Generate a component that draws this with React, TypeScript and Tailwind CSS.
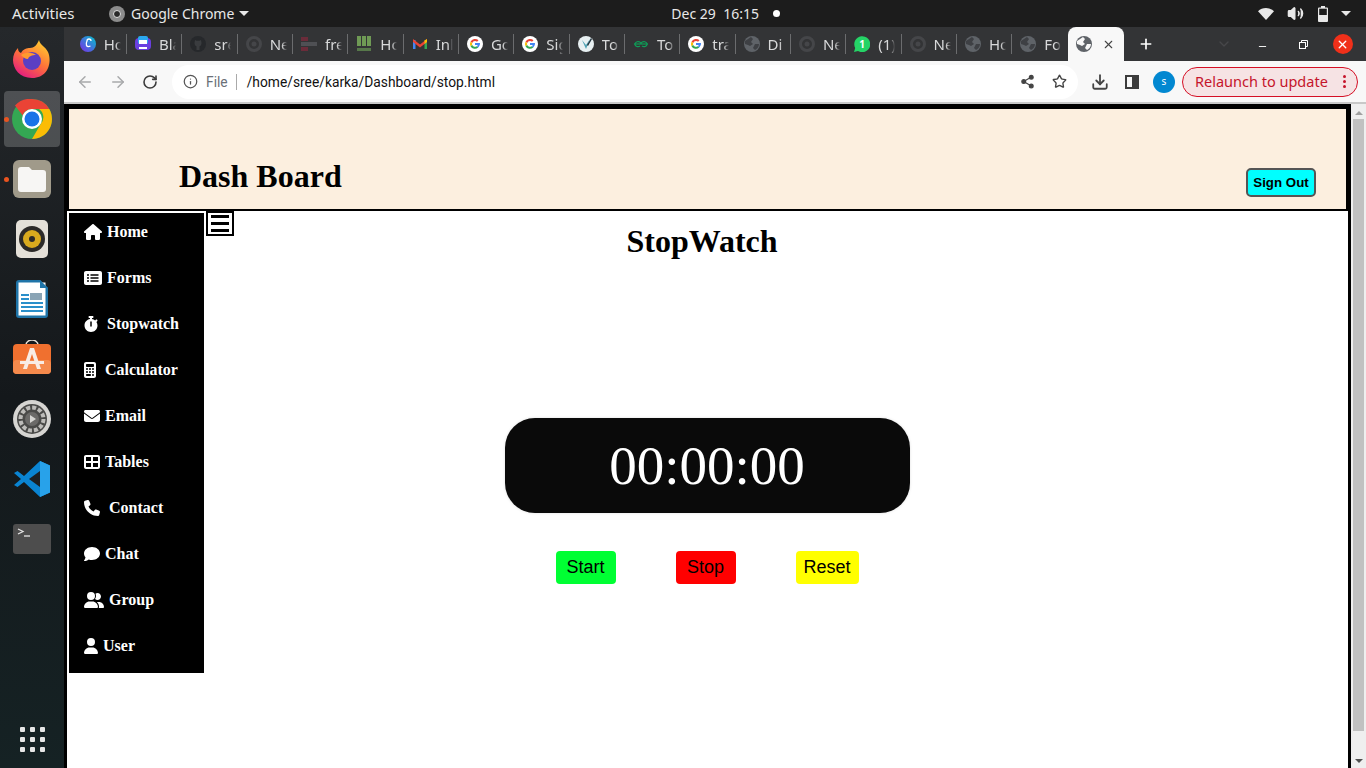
import type { ReactNode } from 'react';
import {
  FaHouse,
  FaRectangleList,
  FaStopwatch,
  FaCalculator,
  FaEnvelope,
  FaTableCellsLarge,
  FaPhone,
  FaComment,
  FaUserGroup,
  FaUser,
} from 'react-icons/fa6';
import {
  ArrowLeft,
  ArrowRight,
  RotateCw,
  Info,
  Share2,
  Star,
  Download,
  Plus,
  X,
  Minus,
  ChevronDown,
  Volume2,
} from 'lucide-react';

const G = (
  <svg viewBox="0 0 16 16" className="w-4 h-4 shrink-0">
    <circle cx="8" cy="8" r="8" fill="#fff" />
    <path d="M8 5a3 3 0 0 1 2 .8l1.500-1.500A5 5 0 0 0 3.500 5.800L5.200 7A3 3 0 0 1 8 5z" fill="#ea4335" />
    <path d="M3.500 5.800a5 5 0 0 0 0 4.400L5.200 9a3 3 0 0 1 0-2z" fill="#fbbc05" />
    <path d="M3.500 10.200a5 5 0 0 0 7.800 1.300L9.700 10.300A3 3 0 0 1 5.200 9z" fill="#34a853" />
    <path d="M13 7h-5v2h2.800a2.500 2.500 0 0 1-1.100 1.300l1.600 1.200A5 5 0 0 0 13 7z" fill="#4285f4" />
  </svg>
);

function globe(bg: string, band: string) {
  return (
    <svg viewBox="0 0 16 16" className="w-4 h-4 shrink-0">
      <circle cx="8" cy="8" r="8" fill={bg} />
      <path d="M1 5c2-1 4-3 6-4l2 2-2 3 2 2-3 2-2-1-3-1zM11 8l4 0c0 3-2 5-4 6l-2-2z" fill={band} />
    </svg>
  );
}

const Globe = globe('#5f6368', '#3e4044');

const ChromeDim = (
  <svg viewBox="0 0 16 16" className="w-4 h-4 shrink-0">
    <circle cx="8" cy="8" r="6.500" fill="none" stroke="#454649" strokeWidth="3" />
    <circle cx="8" cy="8" r="2.500" fill="#454649" />
  </svg>
);

const TABS: { title: string; icon: ReactNode }[] = [
  {
    title: 'Ho',
    icon: (
      <svg viewBox="0 0 16 16" className="w-4 h-4 shrink-0">
        <defs>
          <linearGradient id="canva" x1="0" y1="1" x2="1" y2="0">
            <stop offset="0" stopColor="#7d2ae8" />
            <stop offset="1" stopColor="#00c4cc" />
          </linearGradient>
        </defs>
        <circle cx="8" cy="8" r="8" fill="url(#canva)" />
        <path d="M11 5a2 2 0 0 0-4 0c-1.500 3-1 7 3.500 5" fill="none" stroke="#fff" strokeWidth="1.300" />
      </svg>
    ),
  },
  {
    title: 'Bla',
    icon: (
      <svg viewBox="0 0 16 16" className="w-4 h-4 shrink-0">
        <rect x="0" y="2" width="16" height="12" rx="4" fill="#6a3fe0" />
        <rect x="3" y="0" width="10" height="8" rx="2" fill="#2aa8f0" />
        <rect x="4" y="4" width="8" height="4" fill="#fff" />
        <rect x="4" y="11" width="8" height="2" fill="#fff" />
      </svg>
    ),
  },
  {
    title: 'sre',
    icon: (
      <svg viewBox="0 0 16 16" className="w-4 h-4 shrink-0">
        <circle cx="8" cy="8" r="8" fill="#26282b" />
        <path d="M5 4l1.500.8h3L11 4l.5 3c0 2-1 3-2 3.300V14H6.500v-3.700C5.500 10 4.500 9 4.500 7z" fill="#3a3c3f" />
      </svg>
    ),
  },
  { title: 'Ne', icon: ChromeDim },
  {
    title: 'fre',
    icon: (
      <svg viewBox="0 0 16 16" className="w-4 h-4 shrink-0">
        <rect x="0" y="1" width="7" height="4" fill="#6b2c3a" />
        <rect x="0" y="6" width="16" height="4" fill="#4f5054" />
        <rect x="0" y="11" width="7" height="4" fill="#6b2c3a" />
      </svg>
    ),
  },
  {
    title: 'Ho',
    icon: (
      <svg viewBox="0 0 16 16" className="w-4 h-4 shrink-0">
        <rect x="1" y="0" width="4" height="10" fill="#6f9a55" />
        <rect x="6" y="0" width="4" height="10" fill="#6f9a55" />
        <rect x="11" y="0" width="4" height="10" fill="#6f9a55" />
        <rect x="1" y="12" width="14" height="3" fill="#57784a" />
      </svg>
    ),
  },
  {
    title: 'Inl',
    icon: (
      <svg viewBox="0 0 16 16" className="w-4 h-4 shrink-0">
        <path d="M1 4h2.500v9H1z" fill="#4285f4" />
        <path d="M12.500 4H15v9h-2.500z" fill="#34a853" />
        <path d="M1 3l7 5.500L15 3v3l-7 5.500L1 6z" fill="#ea4335" />
        <path d="M12.500 4.500L15 3v3l-2.500 2z" fill="#fbbc05" />
      </svg>
    ),
  },
  { title: 'Go', icon: G },
  { title: 'Sig', icon: G },
  {
    title: 'To',
    icon: (
      <svg viewBox="0 0 16 16" className="w-4 h-4 shrink-0">
        <circle cx="8" cy="8" r="8" fill="#e8f0f2" />
        <path d="M4 4l4 9 4-10-4 6z" fill="#4fa3b5" />
        <path d="M9 9l4-7 1 1-4 7z" fill="#20323c" />
      </svg>
    ),
  },
  {
    title: 'To',
    icon: (
      <svg viewBox="0 0 16 16" className="w-4 h-4 shrink-0">
        <path d="M1 8h14" stroke="#0f9d58" strokeWidth="1.200" />
        <path d="M8 8a3 2.500 0 1 0-1 2M8 8a3 2.500 0 1 1 1 2" fill="none" stroke="#0f9d58" strokeWidth="1.200" />
      </svg>
    ),
  },
  { title: 'tra', icon: G },
  { title: 'Di', icon: Globe },
  { title: 'Ne', icon: ChromeDim },
  {
    title: '(1)',
    icon: (
      <svg viewBox="0 0 16 16" className="w-4 h-4 shrink-0">
        <path d="M0 16l1.200-4A8 8 0 1 1 4 15z" fill="#25d366" />
        <text x="8" y="11.500" textAnchor="middle" fontSize="10" fontWeight="700" fill="#fff" fontFamily="Open Sans, sans-serif">1</text>
      </svg>
    ),
  },
  { title: 'Ne', icon: ChromeDim },
  { title: 'Ho', icon: Globe },
  { title: 'Fo', icon: Globe },
];

const MENU = [
  { label: 'Home', icon: <FaHouse className="w-[18px] h-[16px]" />, gap: 'ml-[5px]' },
  { label: 'Forms', icon: <FaRectangleList className="w-[18px] h-[16px]" />, gap: 'ml-[5px]' },
  { label: 'Stopwatch', icon: <FaStopwatch className="w-[14px] h-[16px]" />, gap: 'ml-[9px]' },
  { label: 'Calculator', icon: <FaCalculator className="w-[12px] h-[16px]" />, gap: 'ml-[9px]' },
  { label: 'Email', icon: <FaEnvelope className="w-[16px] h-[16px]" />, gap: 'ml-[5px]' },
  { label: 'Tables', icon: <FaTableCellsLarge className="w-[16px] h-[16px]" />, gap: 'ml-[5px]' },
  { label: 'Contact', icon: <FaPhone className="w-[16px] h-[16px]" />, gap: 'ml-[9px]' },
  { label: 'Chat', icon: <FaComment className="w-[16px] h-[16px]" />, gap: 'ml-[5px]' },
  { label: 'Group', icon: <FaUserGroup className="w-[20px] h-[16px]" />, gap: 'ml-[5px]' },
  { label: 'User', icon: <FaUser className="w-[14px] h-[16px]" />, gap: 'ml-[5px]' },
];

const DOCK: { key: string; marker?: boolean; active?: boolean; icon: ReactNode }[] = [
  {
    key: 'firefox',
    icon: (
      <svg viewBox="0 0 38 38" className="w-[38px] h-[38px]">
        <defs>
          <linearGradient id="ff" x1="0.8" y1="0" x2="0.2" y2="1">
            <stop offset="0" stopColor="#ffd02f" />
            <stop offset="0.5" stopColor="#ff7139" />
            <stop offset="1" stopColor="#e31587" />
          </linearGradient>
        </defs>
        <path d="M26 0c1 5 6 6 9 12 4 9 1 26-16 26C7 38 0 29 0 20c0-5 2-9 5-12 0 3 1 4 3 5 2-4 6-5 9-5 4 0 7-3 9-8z" fill="url(#ff)" />
        <circle cx="19" cy="21" r="9" fill="#5b3fc4" />
        <path d="M8 15c4-3 11-3 15 0-4 0-7 1-8 4-3 0-5-2-7-4z" fill="#ff9a2e" />
      </svg>
    ),
  },
  {
    key: 'chrome',
    active: true,
    marker: true,
    icon: (
      <svg viewBox="0 0 40 40" className="w-10 h-10">
        <circle cx="20" cy="20" r="20" fill="#34a853" />
        <path d="M20 0a20 20 0 0 1 17.300 10H20a10 10 0 0 0-9.300 6.500L3 6.500A20 20 0 0 1 20 0z" fill="#ea4335" />
        <path d="M37.300 10A20 20 0 0 1 20 40l8.700-15A10 10 0 0 0 27 10z" fill="#fbbc05" />
        <circle cx="20" cy="20" r="10" fill="#fff" />
        <circle cx="20" cy="20" r="7.500" fill="#1a73e8" />
      </svg>
    ),
  },
  {
    key: 'files',
    marker: true,
    icon: (
      <svg viewBox="0 0 38 38" className="w-[38px] h-[38px]">
        <rect width="38" height="38" rx="6" fill="#a09a8a" />
        <path d="M5 10a3 3 0 0 1 3-3h8l3 3h11a3 3 0 0 1 3 3v16a3 3 0 0 1-3 3H8a3 3 0 0 1-3-3z" fill="#f7f6f4" />
      </svg>
    ),
  },
  {
    key: 'rhythmbox',
    icon: (
      <svg viewBox="0 0 32 38" className="w-8 h-[38px]">
        <rect width="32" height="38" rx="5" fill="#e4e0d8" />
        <circle cx="16" cy="19" r="13" fill="#2c2a28" />
        <circle cx="16" cy="19" r="9" fill="#d9aa1e" />
        <circle cx="16" cy="19" r="3" fill="#2c2a28" />
      </svg>
    ),
  },
  {
    key: 'writer',
    icon: (
      <svg viewBox="0 0 32 38" className="w-8 h-[38px]">
        <path d="M3 0h21l8 8v27a3 3 0 0 1-3 3H3a3 3 0 0 1-3-3V3a3 3 0 0 1 3-3z" fill="#1f74a8" />
        <rect x="2.500" y="2.500" width="27" height="33" fill="#fff" />
        <path d="M24 0l8 8h-8z" fill="#1f74a8" />
        <rect x="5" y="14" width="8" height="2" fill="#2a8fca" />
        <rect x="5" y="18" width="8" height="2" fill="#2a8fca" />
        <rect x="5" y="22" width="22" height="2" fill="#2a8fca" />
        <rect x="5" y="26" width="22" height="2" fill="#2a8fca" />
        <rect x="5" y="30" width="22" height="2" fill="#2a8fca" />
        <rect x="14" y="13" width="12" height="7" fill="#8aa4b5" />
      </svg>
    ),
  },
  {
    key: 'software',
    icon: (
      <svg viewBox="0 0 38 38" className="w-[38px] h-[38px]">
        <path d="M13 5a6 5 0 0 1 12 0" fill="none" stroke="#e7dfd6" strokeWidth="1.500" />
        <rect y="4" width="38" height="30" rx="4" fill="#f0702f" />
        <rect y="20" width="38" height="14" rx="4" fill="#f58a4c" />
        <path d="M17 8h4l7 21h-4l-5-15-5 15h-4z M7 21h24v3H7z" fill="#f8ece4" />
      </svg>
    ),
  },
  {
    key: 'settings',
    icon: (
      <svg viewBox="0 0 38 38" className="w-[38px] h-[38px]">
        <circle cx="19" cy="19" r="19" fill="#d6d5d2" />
        <circle cx="19" cy="19" r="15" fill="#4a4a48" />
        <circle cx="19" cy="19" r="11.500" fill="none" stroke="#bdbcb9" strokeWidth="4" strokeDasharray="4 2" />
        <circle cx="19" cy="19" r="7" fill="#6b6a68" />
        <path d="M17 15l6 4-6 4z" fill="#d6d5d2" />
      </svg>
    ),
  },
  {
    key: 'vscode',
    icon: (
      <svg viewBox="0 0 36 36" className="w-9 h-9">
        <path d="M26 0l10 4.500v27L26 36 10 21l-6.500 5L0 24l7-6-7-6 3.500-2 6.500 5z" fill="#0a84d2" />
        <path d="M26 0l10 4.500v27L26 36z" fill="#28a2ea" />
        <path d="M26 10L15 18l11 8z" fill="#1c2024" />
      </svg>
    ),
  },
  {
    key: 'terminal',
    icon: (
      <svg viewBox="0 0 38 30" className="w-[38px] h-[30px]">
        <rect width="38" height="30" rx="3" fill="#4d4d4d" />
        <path d="M5 5l5 2.500L5 10" fill="none" stroke="#e6e6e6" strokeWidth="1.300" />
        <path d="M11 12h6" stroke="#e6e6e6" strokeWidth="1.300" />
      </svg>
    ),
  },
];

function Dock() {
  return (
    <aside className="w-16 h-full shrink-0 flex flex-col items-center bg-gradient-to-b from-[#25282b] via-[#14181b] to-[#152224]">
      <div className="flex flex-col items-center w-full pt-[4px]">
        {DOCK.map((d) => (
          <div key={d.key} className="relative w-14 h-[56px] mb-1 flex items-center justify-center">
            {d.active && <div className="absolute inset-0 rounded bg-white/20" />}
            {d.marker && <div className="absolute left-0 top-[26px] w-[5px] h-[5px] rounded-full bg-[#e95420]" />}
            <div className="relative">{d.icon}</div>
          </div>
        ))}
      </div>
      <div className="mt-auto mb-[16px] grid grid-cols-3 gap-[5px]">
        {Array.from({ length: 9 }).map((_, i) => (
          <span key={i} className="w-[5px] h-[5px] rounded-[1px] bg-[#e6e6e6]" />
        ))}
      </div>
    </aside>
  );
}

function TopBar() {
  return (
    <header className="h-[27px] shrink-0 bg-[#1c1c1c] text-[#e8e8e8] text-[14px] flex items-center font-['Noto_Sans',sans-serif]">
      <span className="ml-[12px] w-[62px] text-[15px]">Activities</span>
      <svg viewBox="0 0 16 16" className="w-4 h-4 ml-[35px]">
        <circle cx="8" cy="8" r="8" fill="#8c8c8c" />
        <circle cx="8" cy="8" r="3.500" fill="#2a2a2a" stroke="#e0e0e0" />
      </svg>
      <span className="ml-[6px]">Google Chrome</span>
      <span className="ml-[5px] w-0 h-0 border-x-[5px] border-x-transparent border-t-[5px] border-t-[#e8e8e8]" />
      <span className="ml-[422px] flex items-center">
        Dec 29&nbsp;&nbsp;16:15
        <span className="ml-[14px] w-[7px] h-[7px] rounded-full bg-white" />
      </span>
      <div className="ml-auto mr-[15px] flex items-center">
        <svg viewBox="0 0 16 13" className="w-[16px] h-[13px]">
          <path d="M0 4.200a11.500 11.500 0 0 1 16 0L8 13z" fill="#e8e8e8" />
        </svg>
        <Volume2 className="w-[17px] h-[17px] ml-[13px]" fill="#e8e8e8" />
        <svg viewBox="0 0 10 16" className="w-[10px] h-[16px] ml-[14px]">
          <path d="M3 0h4v1.500h2a1 1 0 0 1 1 1V15a1 1 0 0 1-1 1H1a1 1 0 0 1-1-1V2.500a1 1 0 0 1 1-1h2z" fill="#e8e8e8" />
          <rect x="1.200" y="2.700" width="7.600" height="6.300" fill="#1c1c1c" />
        </svg>
        <span className="ml-[13px] w-0 h-0 border-x-[5px] border-x-transparent border-t-[5px] border-t-[#e8e8e8]" />
      </div>
    </header>
  );
}

function TabStrip() {
  return (
    <div className="h-[34px] shrink-0 bg-[#333436] flex items-stretch pl-[7.670px] text-[15px] text-[#d8d9da] font-['Noto_Sans',sans-serif]">
      {TABS.map((t, i) => (
        <div key={i} className="w-[55.330px] shrink-0 flex items-center pl-[8px] relative">
          {t.icon}
          <span className="ml-[8px] w-[17px] overflow-hidden whitespace-nowrap [mask-image:linear-gradient(to_right,black_70%,transparent)]">
            {t.title}
          </span>
          {i < TABS.length - 1 && (
            <span className="absolute right-0 top-[7px] h-[20px] w-px bg-[#6b6c6e]" />
          )}
        </div>
      ))}
      <div className="w-[56px] shrink-0 bg-[#f8f8f8] rounded-t-lg flex items-center pl-[8px] text-[#444]">
        {globe('#5f6368', '#f8f8f8')}
        <X className="w-[13px] h-[13px] ml-[10px]" strokeWidth={2} />
      </div>
      <Plus className="w-[16px] h-[16px] self-center ml-[14px] text-white" strokeWidth={2.500} />
      <ChevronDown className="w-[16px] h-[16px] self-center ml-[62px] text-[#46474a]" />
      <Minus className="w-[11px] h-[11px] self-center ml-[25px] mt-[4px] text-white" />
      <svg viewBox="0 0 9 9" className="w-[9px] h-[9px] self-center ml-[31px]">
        <rect x="0.500" y="2.500" width="6" height="6" fill="none" stroke="#fff" />
        <path d="M2.500 2.500V.5h6v6h-2" fill="none" stroke="#fff" />
      </svg>
      <span className="ml-[25px] self-center w-[20px] h-[20px] rounded-full bg-[#f0301a] flex items-center justify-center">
        <X className="w-[13px] h-[13px] text-white" strokeWidth={2.500} />
      </span>
    </div>
  );
}

function Toolbar() {
  return (
    <div className="h-[43px] shrink-0 bg-[#f8f8f8] border-b-2 border-[#c8c8c8] flex items-center pl-[12px] font-['Noto_Sans',sans-serif]">
      <ArrowLeft className="w-[18px] h-[18px] text-[#a8a9ab]" />
      <ArrowRight className="w-[18px] h-[18px] ml-[15px] text-[#a8a9ab]" />
      <RotateCw className="w-[16px] h-[16px] ml-[15px] text-[#3c3c3c]" strokeWidth={2.400} />
      <div className="ml-[14px] w-[906px] h-[34px] rounded-full bg-white flex items-center pl-[11px] text-[13.800px] font-['Roboto',sans-serif]">
        <Info className="w-[15px] h-[15px] text-[#555]" />
        <span className="ml-[8px] mt-[1px] text-[#6b7078]">File</span>
        <span className="ml-[8px] mr-[10px] w-px h-[16px] bg-[#aaa]" />
        <span className="mt-[1px] text-[#111]">/home/sree/karka/Dashboard/stop.html</span>
        <Share2 className="w-[15px] h-[15px] ml-auto text-[#444] fill-[#444]" />
        <Star className="w-[15px] h-[15px] ml-[17px] mr-[11px] text-[#444]" strokeWidth={2.200} />
      </div>
      <Download className="w-[18px] h-[18px] ml-[13px] text-[#444]" strokeWidth={2.400} />
      <span className="ml-[16px] w-[14px] h-[14px] border-2 border-[#3c3c3c] flex justify-end">
        <span className="w-[5px] bg-[#3c3c3c]" />
      </span>
      <span className="ml-[14px] w-[22px] h-[22px] rounded-full bg-[#0288d1] text-white text-[10px] flex items-center justify-center">
        s
      </span>
      <div className="ml-[7px] w-[176px] h-[30px] rounded-full bg-[#f6e3e4] border border-[#d50f25] flex items-center pl-[12px] text-[14.500px] text-[#c5152b]">
        Relaunch to update
        <span className="ml-auto mr-[11px] flex flex-col gap-[2px]">
          <span className="w-[3px] h-[3px] rounded-full bg-[#c5152b]" />
          <span className="w-[3px] h-[3px] rounded-full bg-[#c5152b]" />
          <span className="w-[3px] h-[3px] rounded-full bg-[#c5152b]" />
        </span>
      </div>
    </div>
  );
}

function Page() {
  return (
    <div className="flex-1 min-h-0 flex bg-white overflow-hidden">
      <div className="flex-1 min-w-0 border-x-[3px] border-t-[5px] border-black flex flex-col font-['Liberation_Serif',serif]">
        <div className="h-[102px] shrink-0 bg-black pl-[2px] pr-[2px] pb-[2px]">
          <div className="h-full bg-[#fcefdf] flex items-end justify-between pb-[12px] pl-[110px] pr-[30px]">
            <h1 className="text-[32px] leading-[37px] mb-[2px] font-bold text-black">Dash Board</h1>
            <button className="w-[70px] h-[29px] rounded-[5px] border-2 border-[#555] bg-[#00ffff] text-[13.300px] font-bold font-['Liberation_Sans',sans-serif] text-black">
              Sign Out
            </button>
          </div>
        </div>
        <div className="flex-1 min-h-0 flex pt-[2px] pl-[2px]">
          <nav className="w-[135px] h-[460px] shrink-0 bg-black text-white">
            {MENU.map((m) => (
              <div key={m.label} className="h-[46px] flex items-center pl-[15px] pb-[8px] text-[16px] font-bold">
                {m.icon}
                <span className={m.gap}>{m.label}</span>
              </div>
            ))}
          </nav>
          <div className="w-[28px] h-[25px] -mt-[2px] shrink-0 ml-[2px] border-[2px] border-black flex flex-col items-center justify-center gap-[4px]">
            <span className="w-[18px] h-[3px] bg-black" />
            <span className="w-[18px] h-[3px] bg-black" />
            <span className="w-[18px] h-[3px] bg-black" />
          </div>
          <main className="flex-1 min-w-0 flex flex-col items-center pr-[178px]">
            <h2 className="mt-[10px] text-[32px] leading-[37px] font-bold text-black">StopWatch</h2>
            <div className="mt-[158px] w-[405px] h-[95px] rounded-[30px] bg-[#0a0a0a] shadow-[0_0_3px_#ddd] flex items-center justify-center text-white text-[55px] ml-[10px] pt-[1px]">
              00:00:00
            </div>
            <div className="mt-[38px] flex gap-[60px] ml-[10px] font-['Liberation_Sans',sans-serif] text-[18px] text-black">
              <button className="w-[60px] h-[33px] rounded-[4px] bg-[#00ff33]">Start</button>
              <button className="w-[60px] h-[33px] rounded-[4px] bg-[#ff0000]">Stop</button>
              <button className="w-[63px] h-[33px] rounded-[4px] bg-[#ffff00]">Reset</button>
            </div>
          </main>
        </div>
      </div>
      <div className="w-[15px] shrink-0 bg-[#efefef] flex flex-col items-center">
        <span className="mt-[7px] w-0 h-0 border-x-[4px] border-x-transparent border-b-[4px] border-b-[#a0a0a0]" />
        <div className="mt-[4px] w-[11px] flex-1 bg-[#c1c1c1]" />
        <div className="h-[37px] flex items-end pb-[5px]">
          <span className="w-0 h-0 border-x-[4px] border-x-transparent border-t-[4px] border-t-[#505050]" />
        </div>
      </div>
    </div>
  );
}

export default function App() {
  return (
    <div className="w-[1366px] h-[768px] overflow-hidden flex flex-col">
      <TopBar />
      <div className="flex-1 min-h-0 flex">
        <Dock />
        <div className="flex-1 min-w-0 flex flex-col">
          <TabStrip />
          <Toolbar />
          <Page />
        </div>
      </div>
    </div>
  );
}
